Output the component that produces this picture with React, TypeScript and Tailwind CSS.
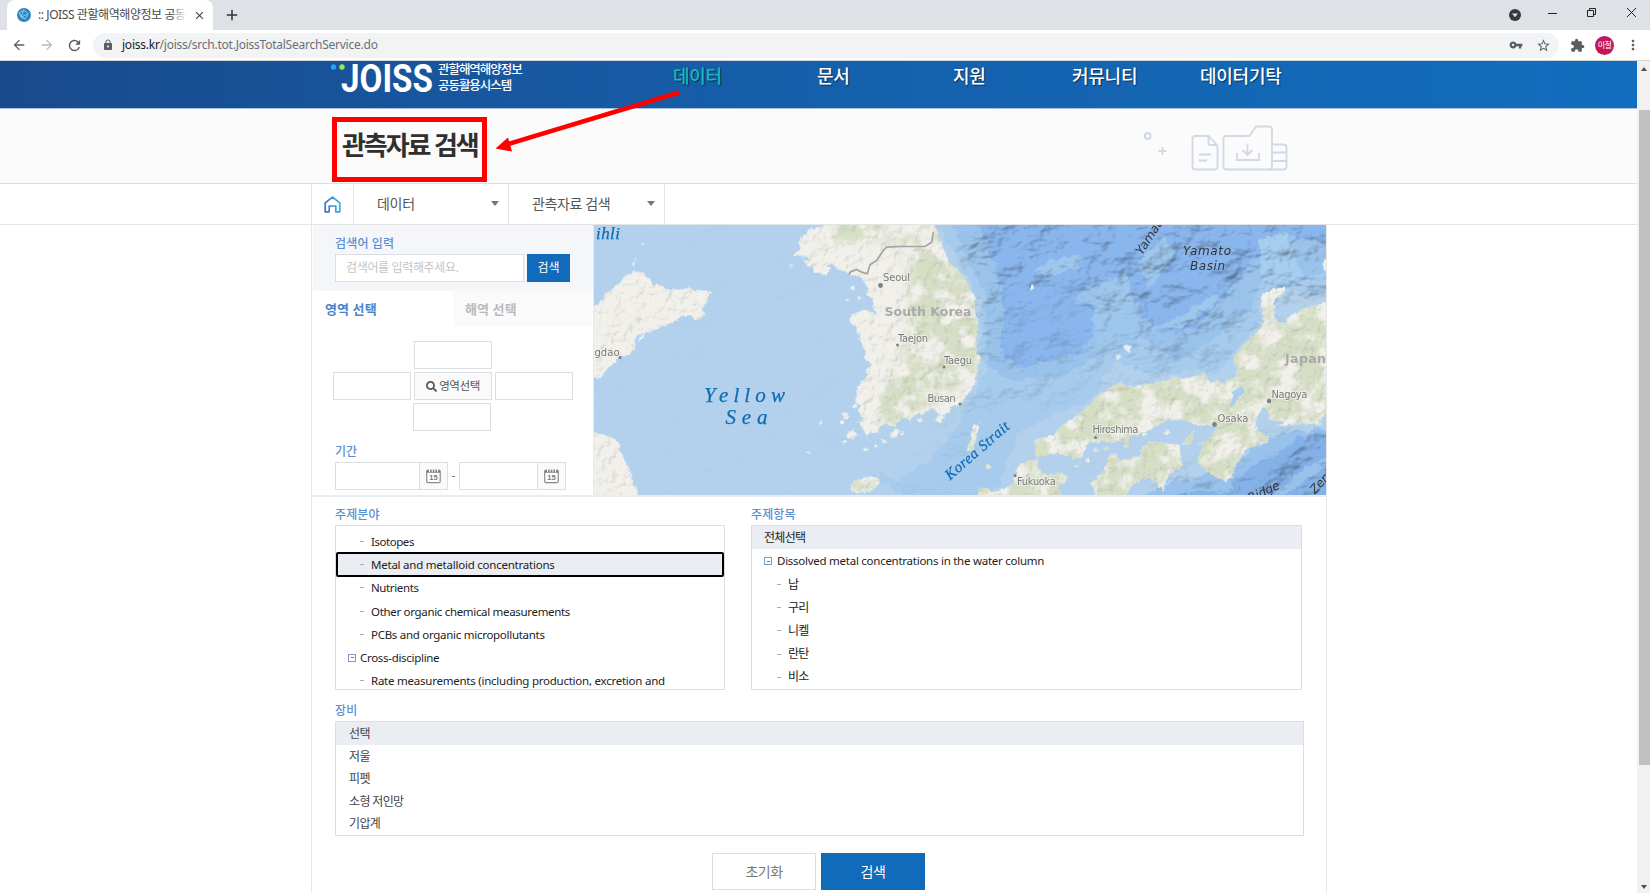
import React from "react";
import {
  MdArrowBack,
  MdArrowForward,
  MdRefresh,
  MdLock,
  MdVpnKey,
  MdStarBorder,
  MdExtension,
  MdMoreVert,
  MdClose,
  MdAdd,
} from "react-icons/md";
import { FaSearch } from "react-icons/fa";

function BrowserChrome() {
  return (
    <div className="h-[61px] shrink-0 border-b border-[#d5d5d5] bg-white">
      <div className="flex h-[30px] bg-[#dee1e6] pl-[7px]">
        <div className="flex h-[30px] w-[206px] items-center rounded-t-[8px] bg-white pl-[10px]">
          <svg width="14" height="14" viewBox="0 0 14 14">
            <circle cx="7" cy="7" r="7" fill="#2b86c5" />
            <path d="M2 5l5-3 4 4-3 5-4-2zM2 5l6 6M7 2l-3 7M11 6L4 9" stroke="#9fd0ee" strokeWidth=".8" fill="none" />
          </svg>
          <div className="relative ml-[7px] w-[150px] overflow-hidden whitespace-nowrap text-[12px] tracking-[-0.42px] text-[#45494d]">
            :: JOISS 관할해역해양정보 공동활
            <div className="absolute top-0 right-0 h-full w-[14px] bg-linear-to-r from-white/30 to-white" />
          </div>
          <MdClose className="ml-[5px] size-[13px] text-[#3c4043]" />
        </div>
        <MdAdd className="mt-[6px] ml-[10px] size-[18px] text-[#303336]" />
        <div className="ml-auto flex pt-[3px] pr-[4px]">
          <svg className="mt-[6px] mr-[27px]" width="12" height="12" viewBox="0 0 12 12">
            <circle cx="6" cy="6" r="6" fill="#35383c" />
            <path d="M3 4.5h6L6 8.300z" fill="#dee1e6" />
          </svg>
          <svg className="mt-[3px]" width="98" height="14" viewBox="0 0 98 14" fill="none" stroke="#222" strokeWidth="1">
            <path d="M0 7.5h9" />
            <path d="M39.5 4.500h6v6h-6zM41.500 4.500v-2h6v6h-2" />
            <path d="M79 2l9 9M88 2l-9 9" />
          </svg>
        </div>
      </div>
      <div className="flex h-[30px] items-center text-[#5a5e63]">
        <MdArrowBack className="ml-[11px] size-[16px]" />
        <MdArrowForward className="ml-[12px] size-[16px] text-[#b9bbbe]" />
        <MdRefresh className="ml-[11px] size-[17px]" />
        <div className="ml-[10px] flex h-[25px] w-[1466px] items-center rounded-full bg-[#f1f3f4] pl-[9px]">
          <MdLock className="size-[12px]" />
          <span className="ml-[8px] text-[12px] tracking-[-0.24px] text-[#6c7074]">
            <span className="text-[#202124]">joiss.kr</span>/joiss/srch.tot.JoissTotalSearchService.do
          </span>
          <MdVpnKey className="ml-auto size-[14px]" />
          <MdStarBorder className="mr-[8px] ml-[13px] size-[15px]" />
        </div>
        <MdExtension className="ml-[11px] size-[15px]" />
        <div className="ml-[10px] flex size-[19px] items-center justify-center rounded-full bg-[#c2185b] text-[8px] tracking-[-0.5px] text-white">
          이철
        </div>
        <MdMoreVert className="ml-[11px] size-[16px]" />
      </div>
    </div>
  );
}

const navItems = [
  { label: "데이터", cls: "w-[144px] text-[#19b8c4]" },
  { label: "문서", cls: "w-[136px] text-white" },
  { label: "지원", cls: "w-[119px] text-white" },
  { label: "커뮤니티", cls: "w-[128px] text-white" },
  { label: "데이터기탁", cls: "w-[90px] text-white" },
];

function SiteHeader() {
  return (
    <div className="flex h-[48px] border-b border-[#a9c0dc] bg-linear-to-r from-[#194a8d] via-[#1560ab] to-[#126dbe]">
      <svg className="ml-[328px] shrink-0" width="110" height="47" viewBox="328 61 110 47">
        <circle cx="333.500" cy="67" r="2.700" fill="#1aa6f0" />
        <circle cx="342" cy="67" r="2.700" fill="#9be84c" />
        <text x="341" y="91.500" fontSize="38" fontWeight="700" fill="#fff" textLength="92" lengthAdjust="spacingAndGlyphs" fontFamily="Roboto, sans-serif">
          JOISS
        </text>
      </svg>
      <div className="w-[235px] shrink-0 pt-[1px] text-[12.5px] leading-[15.5px] font-medium text-white">
        <div className="tracking-[-1.05px]">관할해역해양정보</div>
        <div className="tracking-[-1.05px]">공동활용시스템</div>
      </div>
      <div className="flex text-[18px] leading-[30px] font-medium whitespace-nowrap tracking-[-0.25px] [text-shadow:1px_1px_1px_#00000080]">
        {navItems.map((n) => (
          <span key={n.label} className={n.cls}>
            {n.label}
          </span>
        ))}
      </div>
    </div>
  );
}

function TitleBand() {
  return (
    <div className="relative flex h-[75px] border-b border-[#dfdfdf] bg-[#fbfbfb]">
      <h1 className="ml-[342px] w-[801px] pt-[17px] text-[26px] leading-[38px] font-bold tracking-[-2.1px] text-[#2f2f2f]">관측자료 검색</h1>
      <svg width="148" height="74" viewBox="1143 109 148 74" fill="none" stroke="#cfdae6" strokeWidth="1.800">
        <circle cx="1147.700" cy="136" r="3" />
        <path d="M1158.500 151h8M1162.500 147v8" />
        <path d="M1195.500 136h13l9 9.500v21a3 3 0 0 1-3 3h-19a3 3 0 0 1-3-3v-27.500a3 3 0 0 1 3-3zM1208.500 136v7a2 2 0 0 0 2 2h7M1199 154.500h12M1199 160.500h8" />
        <path d="M1226.500 136h23l6.500-9.500h13a3 3 0 0 1 3 3v37a3 3 0 0 1-3 3h-42.500a3 3 0 0 1-3-3v-27.500a3 3 0 0 1 3-3zM1237 153v7h22v-7M1247.500 143.500v11M1242.500 150l5 5 5-5" />
        <path d="M1272 144.500h11.500a3 3 0 0 1 3 3v19a3 3 0 0 1-3 3h-14M1272 152.500h14M1272 161h14" />
      </svg>
      <div className="absolute top-[8px] left-[332px] h-[65px] w-[155px] border-[5px] border-[#fe0000]" />
      <svg className="absolute top-[-24px] left-[490px]" width="195" height="70" viewBox="490 85 195 70">
        <path d="M679 92.500L508 144" stroke="#fe0000" strokeWidth="4.500" />
        <path d="M495.500 148.500L508 137.500l4 14z" fill="#fe0000" />
      </svg>
    </div>
  );
}

function Caret() {
  return <span className="h-0 w-0 border-x-[4.5px] border-t-[5px] border-x-transparent border-t-[#777]" />;
}

function Breadcrumb() {
  return (
    <div className="flex h-[41px] border-b border-[#e4e4e4] pl-[311px] text-[14px] tracking-[-0.5px] text-[#555]">
      <div className="flex w-[43px] items-center justify-center border-x border-[#e4e4e4]">
        <svg width="17" height="17" viewBox="0 0 17 17" fill="none" strokeWidth="1.700">
          <defs>
            <linearGradient id="home">
              <stop offset="0" stopColor="#3f6fd0" />
              <stop offset="1" stopColor="#2fb4d8" />
            </linearGradient>
          </defs>
          <path d="M1.200 6.800L8.500 1.200l7.300 5.600v9h-4V10H5.200v5.800h-4z" stroke="url(#home)" strokeLinejoin="round" />
        </svg>
      </div>
      <div className="flex w-[155px] items-center justify-between border-r border-[#e4e4e4] pr-[9px] pb-[1px] pl-[23px]">
        <span className="tracking-[-0.3px]">데이터</span>
        <Caret />
      </div>
      <div className="flex w-[156px] items-center justify-between border-r border-[#e4e4e4] pr-[9px] pb-[1px] pl-[23px]">
        <span className="tracking-[-0.4px]">관측자료 검색</span>
        <Caret />
      </div>
    </div>
  );
}

function Box({ className = "" }: { className?: string }) {
  return <div className={"h-[28px] w-[78px] border border-[#dcdfe2] bg-white " + className} />;
}

function CalendarIcon() {
  return (
    <svg width="15" height="16" viewBox="0 0 15 16">
      <rect x=".7" y="2.200" width="13.500" height="12.500" rx="1.500" fill="#fff" stroke="#8a8a8e" strokeWidth="1.200" />
      <path d="M.7 2.500h13.500v2.200H.7z" fill="#77777b" />
      <path d="M3.500 1v3M6.200 1v3M8.900 1v3M11.600 1v3" stroke="#fff" strokeWidth="1" />
      <text x="7.500" y="12.300" fontSize="7.500" textAnchor="middle" fill="#777" fontFamily="Liberation Sans, sans-serif" fontWeight="700">
        15
      </text>
    </svg>
  );
}

function SearchPanel() {
  return (
    <div className="h-[270px] w-[281px] shrink-0 border-r border-[#e6e9ee]">
      <div className="h-[66px] bg-[#f4f6f9] pl-[22px]">
        <div className="h-[29px] pt-[9px] text-[12px] leading-[19px] font-medium tracking-[0.15px] text-[#5a8fd2]">검색어 입력</div>
        <div className="flex gap-[3px]">
          <div className="flex h-[28px] w-[189px] items-center border border-[#dcdfe2] bg-white pl-[10px] text-[12px] tracking-[-0.35px] text-[#c4c4c4]">
            검색어를 입력해주세요.
          </div>
          <button className="h-[28px] w-[43px] bg-[#126abb] text-[12px] text-white">검색</button>
        </div>
      </div>
      <div className="flex h-[36px] text-[13px] leading-[36px] font-bold tracking-[0.1px]">
        <div className="w-[140px] pl-[12px] text-[#4a84cf]">영역 선택</div>
        <div className="w-[139px] bg-[#fafafa] pl-[12px] text-[#b9bbbd]">해역 선택</div>
      </div>
      <div className="grid w-[260px] grid-cols-[78px_78px_78px] justify-end gap-x-[3px] gap-y-[3px] pt-[14px]">
        <Box className="col-start-2" />
        <Box className="col-start-1 row-start-2" />
        <div className="col-start-2 row-start-2 flex h-[28px] items-center justify-center gap-[2px] border border-[#dcdfe2] bg-[#fafafa] text-[11.5px] tracking-[-0.4px] text-[#555]">
          <FaSearch className="size-[11px]" />
          영역선택
        </div>
        <Box className="col-start-3 row-start-2" />
        <Box className="col-start-2 row-start-3 -ml-px" />
      </div>
      <div className="pt-[11px] pl-[22px]">
        <div className="text-[12px] leading-[20px] font-medium text-[#5a8fd2]">기간</div>
        <div className="flex items-center text-[12px] text-[#777]">
          <div className="flex h-[28px] w-[113px] border border-[#dcdfe2]">
            <div className="flex-1" />
            <div className="flex w-[28px] items-center justify-center border-l border-[#dcdfe2] bg-[#fafafa]">
              <CalendarIcon />
            </div>
          </div>
          <span className="w-[11px] text-center">-</span>
          <div className="flex h-[28px] w-[107px] border border-[#dcdfe2]">
            <div className="flex-1" />
            <div className="flex w-[28px] items-center justify-center border-l border-[#dcdfe2] bg-[#fafafa]">
              <CalendarIcon />
            </div>
          </div>
        </div>
      </div>
    </div>
  );
}

const korea =
  "M720,0L700,15 670,25 665,20 650,35 635,50 625,65 632,85 605,107 630,105 650,110 665,120 640,118 650,135 670,140 670,155 700,163 715,160 722,145 710,135 730,128 740,145 760,150 780,165 800,165 820,180 835,200 830,225 850,235 850,262 862,285 845,275 820,268 790,280 775,295 785,310 800,320 800,345 815,365 820,385 828,400 820,415 845,430 830,445 832,465 815,485 800,500 800,525 795,540 810,555 805,575 820,590 808,605 820,625 830,650 840,635 862,640 870,615 890,610 905,620 930,600 945,590 960,600 985,575 995,585 1015,570 1030,565 1050,585 1075,580 1080,560 1110,552 1135,520 1155,490 1162,440 1175,410 1160,400 1158,350 1165,310 1152,260 1155,235 1130,180 1100,145 1080,130 1060,85 1045,45 1035,15 1020,0Z";
const shandong =
  "M0,255L15,258 40,235 42,218 70,203 90,185 95,172 120,160 130,154 160,154 170,170 183,180 187,190 220,197 230,207 255,208 285,205 300,197 310,212 345,210 368,215 355,228 350,248 335,265 345,280 335,295 315,296 305,285 280,285 265,298 240,310 215,317 190,332 165,340 160,352 145,365 148,350 160,340 140,345 133,358 138,372 130,392 120,400 100,408 85,415 70,430 55,440 45,455 35,470 12,475 0,475Z";
const chinaSouth = "M0,632L25,638 50,645 70,655 87,663 92,690 105,720 120,750 130,785 148,835 0,835Z";
const jeju = "M780,795L800,778 840,768 868,772 865,795 840,812 800,820 785,812Z";
const honshu =
  "M1150,240L1100,253 1060,265 1020,285 1005,308 985,305 972,290 975,270 970,250 975,235 990,225 1005,215 1010,198 990,202 965,208 940,220 932,240 935,265 942,285 940,305 930,325 905,350 870,385 855,405 850,425 862,440 858,470 845,475 830,482 815,490 800,480 785,488 770,475 762,455 740,465 720,470 700,475 670,468 650,480 610,490 560,495 530,500 515,485 480,500 460,515 435,535 400,570 360,600 330,620 315,640 290,650 255,657 258,690 260,715 280,705 320,700 350,705 375,715 390,712 405,690 415,665 440,665 455,660 480,668 505,658 530,665 545,645 590,635 620,615 650,600 690,597 720,605 745,615 780,615 800,620 790,645 760,665 745,665 760,675 750,700 745,725 770,750 800,770 825,782 845,770 855,740 880,700 890,685 920,670 950,668 958,650 935,640 915,620 920,590 940,560 955,575 960,600 985,600 1005,605 975,618 1030,612 1080,610 1115,615 1105,600 1120,590 1150,560Z";
const shikoku =
  "M420,790L455,760 470,735 478,700 500,700 505,715 530,718 570,705 575,680 600,665 650,668 690,672 690,700 697,735 670,750 650,775 640,815 620,785 590,770 560,785 535,805 525,835 440,835 430,800Z";
const kyushu =
  "M75,835L90,800 115,805 120,815 150,810 190,790 195,770 205,735 230,722 262,718 265,745 280,760 310,765 325,752 350,765 350,785 325,795 330,815 345,835Z";
const smallIslands =
  "M735,630L728,655 722,672 697,672 715,650ZM70,615L88,610 80,645 68,690 50,692 62,655 65,630ZM1150,100L1118,125 1122,150 1150,160ZM522,383a10,10 0 1 0 20,0a10,10 0 1 0-20,0M498,408a7,7 0 1 0 14,0a7,7 0 1 0-14,0M241,200a7,7 0 1 0 14,0a7,7 0 1 0-14,0M107,738a8,8 0 1 0 16,0a8,8 0 1 0-16,0M640,635l15,-8 5,10 -15,6ZM575,640l12,-5 5,8 -12,6ZM430,685l10,-5 4,10 -9,5ZM460,680l14,-3 3,8 -14,4ZM405,718l12,-5 3,9 -12,4ZM375,735l8,-4 4,7 -8,4ZM520,675l12,-5 4,8 -13,4Z";
const koreaIslets =
  "M755,580l15,-6 8,14 -12,12ZM785,555l12,-8 6,10 -12,8ZM770,640l20,-12 12,14 -14,14 -18,-4ZM748,602l12,-4 4,10 -12,4ZM905,635l14,-10 12,8 -14,16 -14,0ZM875,660l10,-5 6,8 -12,5ZM980,595l12,-4 6,10 -14,6ZM1035,600l14,-18 14,10 -10,14ZM820,686l10,-5 6,6 -10,5ZM755,665l10,-5 5,6 -10,5ZM685,606l8,-6 4,8 -8,6ZM648,695l8,-3 3,6 -8,3ZM780,200l10,-5 5,8 -9,6ZM800,230l14,-4 6,8 -14,6ZM765,238l8,-3 3,6 -8,3ZM598,135l7,-5 4,8 -7,4ZM155,70l6,-2 2,6 -7,2ZM125,130l5,-4 5,4 -5,4ZM135,115l5,-3 3,5 -5,3ZM800,340l8,-3 4,20 -8,3ZM850,675l9,-4 5,6 -9,4ZM930,640l8,-6 6,8 -8,5Z";

function LandShapes() {
  return (
    <>
      <g transform="translate(590 220) scale(.33333)">
        <path d={korea + shandong + chinaSouth + jeju + koreaIslets} />
      </g>
      <g transform="translate(950 220) scale(.33333)">
        <path d={honshu + shikoku + kyushu + smallIslands} />
      </g>
    </>
  );
}

function City({ x, y, cx, cy, r, w, name }: { x: number; y: number; cx: number; cy: number; r: number; w: number; name: string }) {
  return (
    <>
      <circle cx={cx} cy={cy} r={r} fill="#808080" />
      <text x={x} y={y} textLength={w} stroke="#f3f2ec" strokeWidth="2" strokeOpacity=".7" paintOrder="stroke">
        {name}
      </text>
    </>
  );
}

function OceanMap() {
  return (
    <svg className="isolate block shrink-0" width="732" height="270" viewBox="594 224.500 732 270">
      <defs>
        <filter id="soft" x="-10%" y="-10%" width="120%" height="120%">
          <feTurbulence type="fractalNoise" baseFrequency=".035" numOctaves="4" seed="4" result="n" />
          <feDisplacementMap in="SourceGraphic" in2="n" scale="30" xChannelSelector="R" yChannelSelector="G" />
          <feGaussianBlur stdDeviation="2.200" />
        </filter>
        <filter id="coast" x="-2%" y="-2%" width="104%" height="104%">
          <feTurbulence type="fractalNoise" baseFrequency=".25" numOctaves="2" seed="8" result="n" />
          <feDisplacementMap in="SourceGraphic" in2="n" scale="4.500" xChannelSelector="R" yChannelSelector="G" />
        </filter>
        <filter id="seaRelief" x="0" y="0" width="100%" height="100%" colorInterpolationFilters="sRGB">
          <feTurbulence type="fractalNoise" baseFrequency=".024 .034" numOctaves="4" seed="21" result="n" />
          <feColorMatrix in="n" values="0 0 0 0 0 0 0 0 0 0 0 0 0 0 0 1 0 0 0 0" />
          <feDiffuseLighting surfaceScale="8" diffuseConstant="1.180" lightingColor="#fff">
            <feDistantLight azimuth="225" elevation="60" />
          </feDiffuseLighting>
        </filter>
        <filter id="landRelief" x="0" y="0" width="100%" height="100%" colorInterpolationFilters="sRGB">
          <feTurbulence type="fractalNoise" baseFrequency=".1" numOctaves="4" seed="3" />
          <feColorMatrix values="0 0 0 0 0 0 0 0 0 0 0 0 0 0 0 1 0 0 0 0" />
          <feDiffuseLighting surfaceScale="2.500" diffuseConstant="1.160" lightingColor="#fff">
            <feDistantLight azimuth="225" elevation="62" />
          </feDiffuseLighting>
        </filter>
        <filter id="greens" x="0" y="0" width="100%" height="100%" colorInterpolationFilters="sRGB">
          <feTurbulence type="fractalNoise" baseFrequency=".05" numOctaves="5" seed="12" />
          <feColorMatrix values="0 0 0 0 .84 0 0 0 0 .875 0 0 0 0 .775 5 0 0 0 -1.800" />
        </filter>
        <filter id="blurWide" filterUnits="userSpaceOnUse" x="-1200" y="-200" width="2500" height="1300">
          <feGaussianBlur stdDeviation="28" />
        </filter>
        <filter id="blur3" x="-20%" y="-20%" width="140%" height="140%">
          <feGaussianBlur stdDeviation="4" />
        </filter>
        <mask id="deepMask" maskUnits="userSpaceOnUse" x="594" y="224" width="732" height="272">
          <g transform="translate(950 220) scale(.33333)" filter="url(#blurWide)">
            <path fill="#4a4a4a" d="M-1100,-100H1300V1000H-1100Z" opacity=".12" />
            <path fill="#777" d="M-120,900L-100,780 0,740 120,560 400,520 850,440 1000,300 100,200 40,200 80,500Z" />
            <path fill="#fff" d="M0,-80L40,130 100,200 90,400 140,300 200,210 350,200 440,250 500,350 570,380 700,360 860,290 930,200 1000,260 1250,220 1250,-80Z" />
            <path fill="#fff" d="M540,940L650,790 700,760 830,800 900,720 960,690 1030,640 1250,640V940Z" />
          </g>
        </mask>
        <mask id="landMask" maskUnits="userSpaceOnUse" x="594" y="224" width="732" height="272">
          <g fill="#fff" filter="url(#coast)">
            <LandShapes />
          </g>
        </mask>
        <mask id="greenMask" maskUnits="userSpaceOnUse" x="594" y="224" width="732" height="272">
          <g filter="url(#blur3)" fill="#fff">
            <path d="M1000 400L1320 290H1340V510H940V440zM925 215L1000 300 975 375 900 425 868 415 905 350 910 270 890 240zM810 215h75v25l-60 5zM850 475h25v15h-25z" />
          </g>
        </mask>
      </defs>
      <rect x="594" y="224" width="732" height="272" fill="#b3d1ec" />
      <g transform="translate(950 220) scale(.33333)" filter="url(#soft)">
        <path fill="#a6cbed" d="M-50,0L30,130 90,240 90,400 110,450 20,620 -60,720 -160,780 -260,750 -200,790 -100,840 130,840 200,640 330,575 420,540 480,450 500,420 600,460 680,460 740,445 800,460 850,400 920,320 930,250 1000,200 1150,240 1150,0Z" />
        <path fill="#9ac3ec" d="M-30,-60L60,130 110,240 110,430 180,480 330,470 460,400 480,340 540,330 600,370 690,420 800,350 900,270 940,170 1000,200 1150,140 1150,-60Z" />
        <path fill="#8ab6ee" d="M70,-60L140,150 160,240 150,400 200,440 260,430 380,400 430,350 430,250 370,250 380,220 450,190 530,180 580,290 620,330 690,340 760,300 860,180 920,110 1010,50 1150,60 1150,-60Z" />
        <path fill="#9ec7ee" d="M430,250L460,180 530,160 560,280 560,380 440,400ZM560,130L640,50 680,100 600,200ZM600,330L700,280 800,220 810,240 700,320ZM250,150L330,110 400,110 390,140 290,170Z" />
        <path fill="#a5ceef" d="M930,60L1010,30 1040,120 1060,170 990,190 930,170Z" />
        <path fill="#98c1eb" d="M540,840L650,790 830,750 900,690 1000,640 1150,620V840Z" />
        <path fill="#84b1e8" d="M640,840L740,810 830,820 900,740 980,700 1050,650 1150,640 1150,700 1040,760 960,840ZM960,860L1050,790 1150,720V860Z" />
      </g>
      <g mask="url(#deepMask)" className="opacity-55 mix-blend-multiply">
        <rect x="594" y="224" width="732" height="272" filter="url(#seaRelief)" />
      </g>
      <g filter="url(#coast)" fill="#f1f0eb" stroke="#c6def3" strokeWidth="1.500">
        <LandShapes />
      </g>
      <g mask="url(#landMask)">
        <g mask="url(#greenMask)">
          <rect x="594" y="224" width="732" height="272" filter="url(#greens)" />
        </g>
      </g>
      <g mask="url(#landMask)" className="opacity-25 mix-blend-multiply">
        <rect x="594" y="224" width="732" height="272" filter="url(#landRelief)" />
      </g>
      <g transform="translate(950 220) scale(.33333)">
        <path fill="#a9cdec" d="M875,497L885,515 865,530 855,550 838,565 850,525 845,515Z" />
      </g>
      <path
        transform="translate(590 220) scale(.33333)"
        d="M778,165L780,155 800,147 815,155 832,160 840,133 860,120 880,90 890,80 930,78 1005,78 1025,65 1030,35"
        fill="none"
        stroke="#a3a3a3"
        strokeWidth="5"
      />
      <g fontSize="10" fill="#787878" fontFamily="DejaVu Sans, sans-serif">
        <City x={883} y={280.500} cx={880.5} cy={285} r={2.4} w={27} name="Seoul" />
        <City x={898} y={341} cx={897.5} cy={344.500} r={1.500} w={30} name="Taejon" />
        <City x={944} y={363.500} cx={944} cy={366.500} r={1.500} w={28} name="Taegu" />
        <City x={927.500} y={401} cx={960} cy={403.500} r={1.500} w={28} name="Busan" />
        <City x={1092.500} y={432} cx={1095.500} cy={437} r={1.500} w={46} name="Hiroshima" />
        <City x={1017} y={484.500} cx={1015} cy={475} r={1.500} w={39} name="Fukuoka" />
        <City x={1217.500} y={421.500} cx={1214.500} cy={424} r={2.400} w={31} name="Osaka" />
        <City x={1271.500} y={397} cx={1269} cy={400.500} r={2.200} w={36} name="Nagoya" />
        <City x={594.500} y={355.500} cx={620} cy={357} r={1.500} w={25} name="gdao" />
      </g>
      <g fontSize="12.500" fontWeight="700" fill="#a9a9a9" fontFamily="DejaVu Sans, sans-serif">
        <text x="884.500" y="315.500" textLength="87">South Korea</text>
        <text x="1285" y="362.500" textLength="41">Japan</text>
      </g>
      <g fill="#0f6cb3" fontStyle="italic" fontFamily="Liberation Serif, serif" stroke="#0f6cb3" strokeWidth=".25">
        <text x="596" y="238" fontSize="17" textLength="24">ihli</text>
        <text x="704" y="401" fontSize="21" textLength="81">Yellow</text>
        <text x="725.500" y="423.500" fontSize="21" textLength="42">Sea</text>
        <text transform="translate(950 480) rotate(-41)" fontSize="15" textLength="80">Korea Strait</text>
      </g>
      <g fill="#333" fontStyle="italic" fontSize="12" fontFamily="DejaVu Sans, sans-serif">
        <text x="1183" y="254.500" textLength="48">Yamato</text>
        <text x="1190" y="269" textLength="35">Basin</text>
        <text transform="translate(1142 255) rotate(-57)">Yamato</text>
        <text transform="translate(1250 502) rotate(-25)" textLength="34">Ridge</text>
        <text transform="translate(1315 494) rotate(-48)">Zenisu</text>
      </g>
    </svg>
  );
}

function Dash() {
  return <span className="h-px w-[4px] bg-[#a9adb3]" />;
}

function Minus() {
  return (
    <span className="flex size-[8px] items-center justify-center border border-[#7f9cc0]">
      <span className="h-px w-[3px] bg-[#5a7aa5]" />
    </span>
  );
}

const fields = [
  { text: "Isotopes", cls: "tracking-[-0.45px]" },
  { text: "Metal and metalloid concentrations", cls: "tracking-[-0.23px]" },
  { text: "Nutrients", cls: "tracking-[-0.38px]" },
  { text: "Other organic chemical measurements", cls: "tracking-[-0.32px]" },
  { text: "PCBs and organic micropollutants", cls: "tracking-[-0.28px]" },
];

function SubjectLists() {
  return (
    <div className="flex gap-[26px] pt-[7px] pl-[22px]">
      <div className="w-[390px]">
        <Label>주제분야</Label>
        <div className="flex h-[165px] flex-col overflow-hidden border border-[#dcdfe2] pt-[4px] text-[11.5px] text-[#222]">
          {fields.map((f, i) => (
            <div
              key={f.text}
              className={
                i === 1
                  ? "-my-px flex h-[25.2px] shrink-0 items-center rounded-[2px] border-2 border-black bg-[#eaeef3] pl-[22px]"
                  : "flex h-[23.2px] shrink-0 items-center pl-[24px]"
              }
            >
              <Dash />
              <span className={"ml-[7px] " + f.cls}>{f.text}</span>
            </div>
          ))}
          <div className="flex h-[23.2px] shrink-0 items-center pl-[12px]">
            <Minus />
            <span className="ml-[4px] tracking-[-0.3px]">Cross-discipline</span>
          </div>
          <div className="flex h-[23.2px] shrink-0 items-center pl-[24px]">
            <Dash />
            <span className="ml-[7px] tracking-[-0.24px]">Rate measurements (including production, excretion and</span>
          </div>
        </div>
      </div>
      <div className="w-[551px]">
        <Label>주제항목</Label>
        <div className="h-[165px] overflow-hidden border border-[#dcdfe2] text-[12px] text-[#222]">
          <div className="h-[23px] bg-[#eaeef3] pl-[12px] leading-[23px] tracking-[-0.7px]">전체선택</div>
          <div className="flex h-[24px] items-center pl-[12px] text-[11.5px]">
            <Minus />
            <span className="ml-[5px] tracking-[-0.26px]">Dissolved metal concentrations in the water column</span>
          </div>
          {["납", "구리", "니켈", "란탄", "비소"].map((t) => (
            <div key={t} className="flex h-[23.2px] items-center pl-[25px] tracking-[-0.75px]">
              <Dash />
              <span className="ml-[7px]">{t}</span>
            </div>
          ))}
        </div>
      </div>
    </div>
  );
}

function Label({ children }: { children: React.ReactNode }) {
  return <div className="h-[21px] text-[12px] leading-[21px] font-medium tracking-[0.1px] text-[#5a8fd2]">{children}</div>;
}

function Equipment() {
  return (
    <div className="pt-[10px] pl-[22px]">
      <Label>장비</Label>
      <div className="h-[115px] w-[969px] overflow-hidden border border-[#dcdfe2] text-[12px] tracking-[-0.65px] text-[#444]">
        <div className="h-[23px] bg-[#eaeef3] pl-[13px] leading-[23px]">선택</div>
        {["저울", "피펫", "소형 저인망", "기압계"].map((t) => (
          <div key={t} className="h-[22.4px] pl-[13px] leading-[23px]">
            {t}
          </div>
        ))}
      </div>
    </div>
  );
}

function Scrollbar() {
  return (
    <div className="flex w-[13px] shrink-0 flex-col items-center bg-[#f1f1f1]">
      <span className="mt-[6px] h-0 w-0 border-x-[3.5px] border-b-[4px] border-x-transparent border-b-[#505050]" />
      <div className="mt-[39px] ml-[2px] h-[655px] w-[11px] bg-[#c1c1c1]" />
      <span className="mt-auto mb-[4px] h-0 w-0 border-x-[3.5px] border-t-[4px] border-x-transparent border-t-[#505050]" />
    </div>
  );
}

export default function App() {
  return (
    <div className="flex h-[893px] w-[1650px] flex-col overflow-hidden bg-white font-['Noto_Sans','Noto_Sans_CJK_KR',sans-serif]">
      <BrowserChrome />
      <div className="flex min-h-0 flex-1">
        <div className="flex-1 overflow-hidden">
          <SiteHeader />
          <TitleBand />
          <Breadcrumb />
          <div className="ml-[311px] h-[668px] w-[1016px] border-x border-[#e6e6e6] pl-px">
            <div className="flex h-[272px] w-[1013px] border-b-2 border-[#e9edf2]">
              <SearchPanel />
              <OceanMap />
            </div>
            <SubjectLists />
            <Equipment />
            <div className="flex gap-[5px] pt-[17px] pl-[399px] text-[14px] tracking-[-0.5px]">
              <button className="h-[37px] w-[104px] border border-[#dcdfe2] bg-white text-[#777]">초기화</button>
              <button className="h-[37px] w-[104px] bg-[#126abb] text-white">검색</button>
            </div>
          </div>
        </div>
        <Scrollbar />
      </div>
    </div>
  );
}
